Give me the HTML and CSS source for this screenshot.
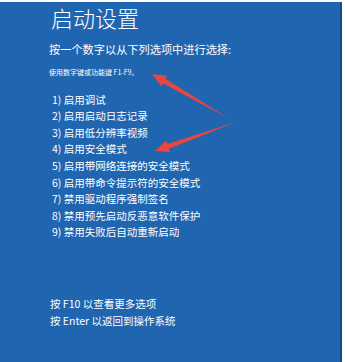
FILE: index.html
```html
<!DOCTYPE html>
<html lang="zh-CN">
<head>
    <meta charset="UTF-8">
    <meta name="viewport" content="width=device-width, initial-scale=1.0">
    <title>启动设置</title>
    <link rel="stylesheet" href="styles.css">
</head>
<body>
    <div class="screen">
        <h1 class="title">启动设置</h1>
        <p class="lead">按一个数字以从下列选项中进行选择:</p>
        <p class="hint">使用数字键或功能键 F1-F9。</p>

        <ol class="options">
            <li>1) 启用调试</li>
            <li>2) 启用启动日志记录</li>
            <li>3) 启用低分辨率视频</li>
            <li>4) 启用安全模式</li>
            <li>5) 启用带网络连接的安全模式</li>
            <li>6) 启用带命令提示符的安全模式</li>
            <li>7) 禁用驱动程序强制签名</li>
            <li>8) 禁用预先启动反恶意软件保护</li>
            <li>9) 禁用失败后自动重新启动</li>
        </ol>

        <div class="footer">
            <p>按 F10 以查看更多选项</p>
            <p>按 Enter 以返回到操作系统</p>
        </div>

        <!-- red arrows drawn over the screen -->
        <svg class="arrows" width="345" height="362" viewBox="0 0 345 362">
            <polygon points="152,74 167.1,75.8 165.4,78.8 228,118 162.8,83.2 161.1,86.2" />
            <polygon points="155,151 170.2,151.9 169,148.7 236,122 167.4,143.9 166.2,140.6" />
        </svg>
    </div>
</body>
</html>
```

FILE: styles.css
```css
body {
    margin: 0;
    background-color: #ffffff;
    font-family: "Noto Sans CJK SC", "Noto Sans", sans-serif;
}
.screen {
    position: relative;
    width: 342px;
    height: 360px;
    margin-top: 2px;
    padding-left: 49px;
    box-sizing: border-box;
    background-color: #2065b0;
    border-right: 2px solid #154a86;
    color: #ffffff;
    overflow: hidden;
}
.title {
    margin: 0;
    padding: 2px 0 0 2px;
    font-size: 22px;
    line-height: 26px;
    font-weight: 300;
}
.lead {
    margin: 12px 0 0;
    font-size: 11.2px;
    line-height: 14px;
}
.hint {
    margin: 11px 0 0;
    font-size: 7px;
    line-height: 10px;
}
.options {
    list-style: none;
    margin: 14.7px 0 0;
    padding: 0 0 0 3px;
    font-size: 10.5px;
    line-height: 16.6px;
}
.footer {
    margin-top: 53.5px;
    padding-left: 1px;
    font-size: 10.5px;
    line-height: 17px;
}
.footer p {
    margin: 0;
}
.arrows {
    position: absolute;
    left: 0;
    top: -2px;
    fill: #e8463e;
}
```
